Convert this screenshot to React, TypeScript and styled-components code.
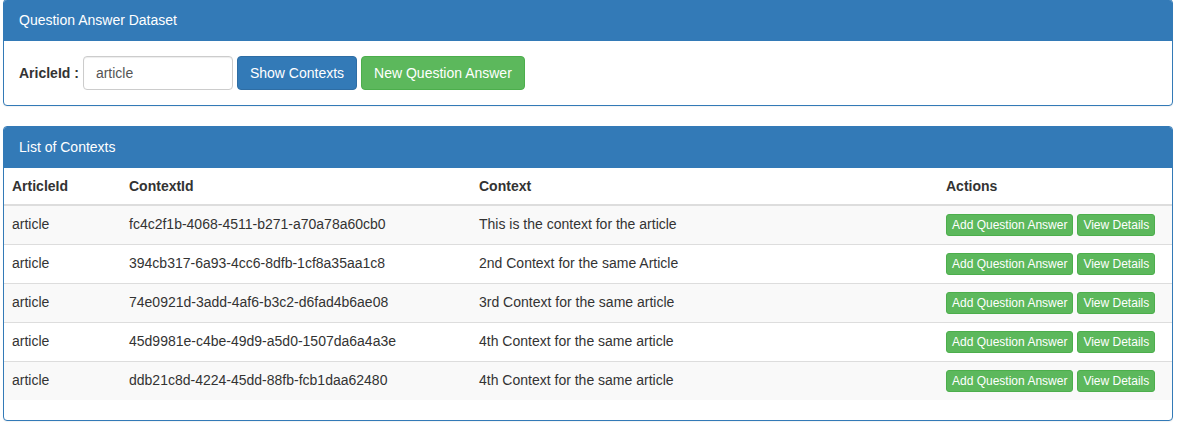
import React from "react";
import styled, { createGlobalStyle } from "styled-components";

const Global = createGlobalStyle`
  html, body { margin: 0; padding: 0; background: #fff; }
  body {
    font-family: "Liberation Sans", Arial, Helvetica, sans-serif;
    font-size: 14px;
    line-height: 1.42857143;
    color: #333;
  }
  * { box-sizing: border-box; }
`;

const Page = styled.div`
  width: 1170px;
  margin: -1px 0 0 3px;
`;

const Panel = styled.section`
  border: 1px solid #337ab7;
  border-radius: 4px;
  background: #fff;
  margin-bottom: 20px;
  box-shadow: 0 1px 1px rgba(0, 0, 0, 0.05);
  overflow: hidden;
`;

const PanelHeading = styled.div`
  background: #337ab7;
  color: #fff;
  padding: 10px 15px;
  border-bottom: 1px solid #337ab7;
  font-size: 14px;
  line-height: 20px;
`;

const PanelBody = styled.div`
  padding: 15px;
`;

const FormRow = styled.div`
  display: flex;
  align-items: center;
  gap: 4px;
`;

const Label = styled.label`
  font-weight: bold;
  margin-right: 0;
`;

const Input = styled.input`
  width: 150px;
  height: 34px;
  padding: 6px 12px;
  font-family: inherit;
  font-size: 14px;
  color: #555;
  border: 1px solid #ccc;
  border-radius: 4px;
  box-shadow: inset 0 1px 1px rgba(0, 0, 0, 0.075);
  outline: none;
`;

const Button = styled.button<{ $variant: "primary" | "success"; $size?: "xs" }>`
  font-family: inherit;
  display: inline-block;
  cursor: pointer;
  color: #fff;
  white-space: nowrap;
  background: ${(p) => (p.$variant === "primary" ? "#337ab7" : "#5cb85c")};
  border: 1px solid ${(p) => (p.$variant === "primary" ? "#2e6da4" : "#4cae4c")};
  border-radius: ${(p) => (p.$size === "xs" ? "3px" : "4px")};
  padding: ${(p) => (p.$size === "xs" ? "1px 5px" : "6px 12px")};
  font-size: ${(p) => (p.$size === "xs" ? "12px" : "14px")};
  line-height: ${(p) => (p.$size === "xs" ? "18px" : "20px")};
`;

const Table = styled.table`
  width: 100%;
  border-collapse: collapse;
  border-spacing: 0;
  margin-bottom: 20px;
`;

const Th = styled.th<{ $w?: number }>`
  text-align: left;
  font-weight: bold;
  padding: 8px;
  line-height: 20px;
  vertical-align: bottom;
  border-bottom: 2px solid #ddd;
  width: ${(p) => (p.$w ? `${p.$w}px` : "auto")};
`;

const Tr = styled.tr`
  &:nth-of-type(odd) {
    background: #f9f9f9;
  }
`;

const Td = styled.td`
  padding: 8px;
  line-height: 20px;
  vertical-align: top;
  border-top: 1px solid #ddd;
`;

const Actions = styled.div`
  display: flex;
  gap: 4px;
`;

const rows = [
  { a: "article", c: "fc4c2f1b-4068-4511-b271-a70a78a60cb0", t: "This is the context for the article" },
  { a: "article", c: "394cb317-6a93-4cc6-8dfb-1cf8a35aa1c8", t: "2nd Context for the same Article" },
  { a: "article", c: "74e0921d-3add-4af6-b3c2-d6fad4b6ae08", t: "3rd Context for the same article" },
  { a: "article", c: "45d9981e-c4be-49d9-a5d0-1507da6a4a3e", t: "4th Context for the same article" },
  { a: "article", c: "ddb21c8d-4224-45dd-88fb-fcb1daa62480", t: "4th Context for the same article" },
];

export default function App() {
  return (
    <Page>
      <Global />
      <Panel>
        <PanelHeading>Question Answer Dataset</PanelHeading>
        <PanelBody>
          <FormRow>
            <Label>AricleId :</Label>
            <Input defaultValue="article" />
            <Button $variant="primary">Show Contexts</Button>
            <Button $variant="success">New Question Answer</Button>
          </FormRow>
        </PanelBody>
      </Panel>
      <Panel>
        <PanelHeading>List of Contexts</PanelHeading>
        <Table>
          <thead>
            <tr>
              <Th $w={117}>ArticleId</Th>
              <Th $w={350}>ContextId</Th>
              <Th $w={467}>Context</Th>
              <Th>Actions</Th>
            </tr>
          </thead>
          <tbody>
            {rows.map((r, i) => (
              <Tr key={i}>
                <Td>{r.a}</Td>
                <Td>{r.c}</Td>
                <Td>{r.t}</Td>
                <Td>
                  <Actions>
                    <Button $variant="success" $size="xs">Add Question Answer</Button>
                    <Button $variant="success" $size="xs">View Details</Button>
                  </Actions>
                </Td>
              </Tr>
            ))}
          </tbody>
        </Table>
      </Panel>
    </Page>
  );
}
